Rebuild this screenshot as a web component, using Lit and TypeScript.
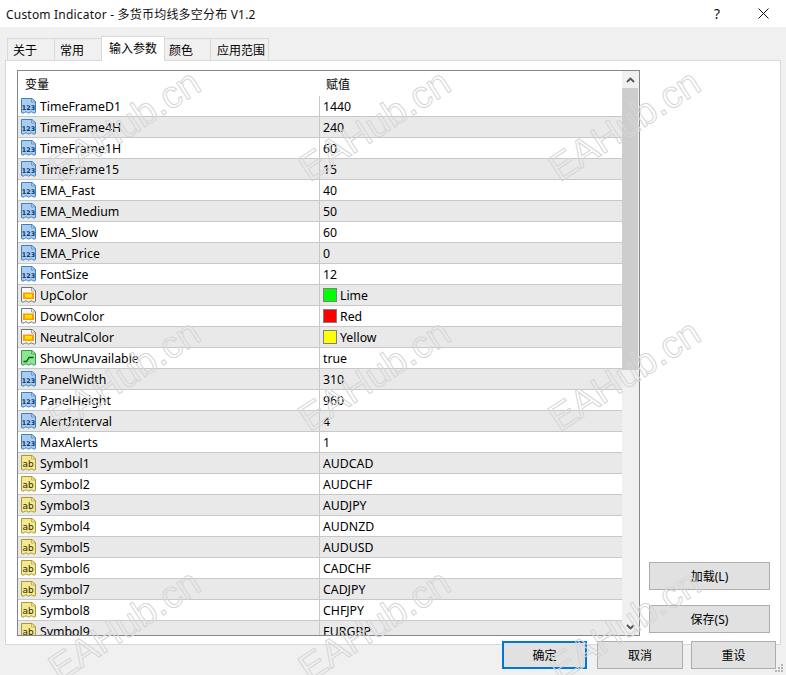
import { LitElement, html, css, svg } from "lit";
import { customElement } from "lit/decorators.js";

type Kind = "num" | "str" | "col" | "bool";
interface Row { name: string; value: string; kind: Kind; swatch?: string }

const num = (name: string, value: string): Row => ({ name, value, kind: "num" });
const str = (name: string, value: string): Row => ({ name, value, kind: "str" });
const col = (name: string, value: string, swatch: string): Row => ({ name, value, kind: "col", swatch });

const ROWS: Row[] = [
  num("TimeFrameD1", "1440"), num("TimeFrame4H", "240"), num("TimeFrame1H", "60"), num("TimeFrame15", "15"),
  num("EMA_Fast", "40"), num("EMA_Medium", "50"), num("EMA_Slow", "60"), num("EMA_Price", "0"), num("FontSize", "12"),
  col("UpColor", "Lime", "#00ff00"), col("DownColor", "Red", "#ff0000"), col("NeutralColor", "Yellow", "#ffff00"),
  { name: "ShowUnavailable", value: "true", kind: "bool" },
  num("PanelWidth", "310"), num("PanelHeight", "960"), num("AlertInterval", "4"), num("MaxAlerts", "1"),
  str("Symbol1", "AUDCAD"), str("Symbol2", "AUDCHF"), str("Symbol3", "AUDJPY"), str("Symbol4", "AUDNZD"),
  str("Symbol5", "AUDUSD"), str("Symbol6", "CADCHF"), str("Symbol7", "CADJPY"), str("Symbol8", "CHFJPY"), str("Symbol9", "EURGBP"),
];

const PAGE = "M1.500 .5H12L15.500 3.500V14.500q-1.200 1.400-2.800 0t-2.800 0-2.600 0-2.800 0-3 0Z";
const FOLD = "M11.500 .5V4H15.500";
const STYLE: Record<Kind, [string, string]> = {
  num: ["#a9ccf0", "#3f80bf"],
  str: ["#f6e88f", "#ab9638"],
  col: ["#f7f7f7", "#707070"],
  bool: ["#8be592", "#329a4c"],
};

function icon(kind: Kind) {
  const [fill, stroke] = STYLE[kind];
  let inner = svg``;
  if (kind === "num") inner = svg`<text x="8.500" y="11.500" class="i123">123</text>`;
  if (kind === "str") inner = svg`<text x="8" y="12" class="iab">ab</text>`;
  if (kind === "col") inner = svg`<rect x="3" y="5.500" width="11" height="6.500" fill="#ff9a00"/><rect x="5" y="7" width="7" height="3.500" fill="#ffe000"/>`;
  if (kind === "bool") inner = svg`<path d="M3.500 11.500H6.500L9 7.500H13.500" fill="none" stroke="#14572a" stroke-width="1.400"/>`;
  return html`<svg class="icon" width="17" height="17" viewBox="0 0 17 17"><path d=${PAGE} fill=${fill} stroke=${stroke}/><path d=${FOLD} fill="none" stroke=${stroke} stroke-opacity=".6"/>${inner}</svg>`;
}

@customElement("app-root")
export class AppRoot extends LitElement {
  static styles = css`
    :host { display: block; width: 786px; height: 675px; overflow: hidden; position: relative; background: #f0f0f0;
      font-family: "Noto Sans", "Noto Sans CJK SC", sans-serif; font-size: 12.3px; color: #000; }
    .title { height: 27px; background: #fff; display: flex; align-items: center; padding-left: 6px; font-size: 12px; color: #111; }
    .title .t { flex: 1; letter-spacing: 0.2px; }
    .help { width: 46px; text-align: center; font-size: 14px; }
    .close { width: 46px; display: flex; justify-content: center; }
    .tabs { display: flex; align-items: flex-end; height: 33px; padding-left: 8px; box-sizing: border-box; }
    .tab { height: 22px; box-sizing: border-box; background: #f0f0f0; border: 1px solid #d9d9d9; border-bottom: 0; margin-left: -1px;
      display: flex; align-items: center; font-size: 12px; }
    .tab.on { height: 25px; background: #fff; padding-bottom: 3px; position: relative; margin-bottom: -1px; }
    .panel { margin-left: 5px; width: 776px; height: 585px; box-sizing: border-box; background: #fff; border: 1px solid #d9d9d9;
      padding: 9px 0 8px 11px; display: flex; }
    .box { width: 623px; height: 566px; box-sizing: border-box; border: 1px solid #828790; display: flex; background: #fff; overflow: hidden; }
    .list { width: 604px; overflow: hidden; }
    .head { height: 25px; display: grid; grid-template-columns: 301px 1fr; align-items: center; font-size: 12px; }
    .head span { padding-left: 7px; }
    .row { height: 21px; box-sizing: border-box; border-bottom: 1px solid #c8c8c8; display: grid; grid-template-columns: 301px 1fr; background: #fff; }
    .row:nth-child(even) { background: #e9e9e9; }
    .n { display: flex; align-items: center; padding-left: 2px; gap: 3px; white-space: nowrap; }
    .v { display: flex; align-items: center; padding-left: 3px; border-left: 1px solid #c8c8c8; gap: 3px; white-space: nowrap; }
    .icon { flex: none; }
    .i123 { font: bold 6.400px "DejaVu Sans", sans-serif; fill: #12396a; text-anchor: middle; }
    .iab { font: 9px "DejaVu Sans", sans-serif; fill: #2b2b10; text-anchor: middle; }
    .sw { width: 12px; height: 12px; border: 1px solid #808080; flex: none; }
    .scroll { width: 17px; background: #f0f0f0; display: flex; flex-direction: column; }
    .arrow { height: 17px; display: flex; align-items: center; justify-content: center; }
    .thumb { height: 282px; background: #cdcdcd; flex: none; margin: 0 1px 0 0; }
    .track { flex: 1; }
    .side { width: 121px; margin-left: 9px; display: flex; flex-direction: column; justify-content: flex-end; gap: 15px; padding-bottom: 3px; }
    .btn { box-sizing: border-box; height: 28px; background: #e1e1e1; border: 1px solid #adadad; display: flex; align-items: center; justify-content: center; font-size: 12px; }
    .foot { display: flex; justify-content: flex-end; padding-right: 10px; margin-top: -4px; position: relative; }
    .foot .btn { width: 86px; }
    .foot .primary { width: 85px; border: 2px solid #0078d7; margin-right: 10px; }
    .foot .cancel { margin-right: 8px; }
    .foot .reset { width: 85px; }
    .marks { position: absolute; left: 0; top: 0; display: grid; grid-template-columns: repeat(3, 250px); grid-auto-rows: 250px; pointer-events: none; }
    .mark { display: flex; align-items: center; justify-content: center; }
    .mark span { font: 38px "Liberation Sans", sans-serif; color: transparent; -webkit-text-stroke: 1px #d6d6d6; transform: rotate(-33deg); white-space: nowrap; }
    .grip { position: absolute; right: 2px; bottom: 2px; }
  `;

  render() {
    const tabs: [string, number, number, boolean][] = [
      ["关于", 48, 5, false], ["常用", 48, 5, false], ["输入参数", 64, 7, true], ["颜色", 47, 4, false], ["应用范围", 59, 6, false],
    ];
    return html`
      <div class="title">
        <span class="t">Custom Indicator - 多货币均线多空分布 V1.2</span>
        <span class="help">?</span>
        <span class="close"><svg width="11" height="11" viewBox="0 0 11 11"><path d="M.5.5l10 10M10.500.5l-10 10" stroke="#111" fill="none"/></svg></span>
      </div>
      <div class="tabs">
        ${tabs.map(([t, w, p, on]) => html`<div class="tab ${on ? "on" : ""}" style="width:${w}px;padding-left:${p}px">${t}</div>`)}
      </div>
      <div class="panel">
        <div class="box">
          <div class="list">
            <div class="head"><span>变量</span><span>赋值</span></div>
            <div class="rows">
              ${ROWS.map((r) => html`<div class="row">
                <div class="n">${icon(r.kind)}<span>${r.name}</span></div>
                <div class="v">${r.swatch ? html`<i class="sw" style="background:${r.swatch}"></i>` : ""}<span>${r.value}</span></div>
              </div>`)}
            </div>
          </div>
          <div class="scroll">
            <div class="arrow"><svg width="9" height="6" viewBox="0 0 9 6"><path d="M1 5l3.500-3.500L8 5" fill="none" stroke="#555" stroke-width="1.800"/></svg></div>
            <div class="thumb"></div>
            <div class="track"></div>
            <div class="arrow"><svg width="9" height="6" viewBox="0 0 9 6"><path d="M1 1l3.500 3.500L8 1" fill="none" stroke="#555" stroke-width="1.800"/></svg></div>
          </div>
        </div>
        <div class="side">
          <div class="btn">加载(L)</div>
          <div class="btn">保存(S)</div>
        </div>
      </div>
      <div class="foot">
        <div class="btn primary">确定</div>
        <div class="btn cancel">取消</div>
        <div class="btn reset">重设</div>
      </div>
      <svg class="grip" width="10" height="10" viewBox="0 0 10 10" fill="#b5b5b5"><rect x="7" y="1" width="2" height="2"/><rect x="4" y="4" width="2" height="2"/><rect x="7" y="4" width="2" height="2"/><rect x="1" y="7" width="2" height="2"/><rect x="4" y="7" width="2" height="2"/><rect x="7" y="7" width="2" height="2"/></svg>
      <div class="marks">
        ${Array.from({ length: 9 }, () => html`<div class="mark"><span>EAHub.cn</span></div>`)}
      </div>
    `;
  }
}
